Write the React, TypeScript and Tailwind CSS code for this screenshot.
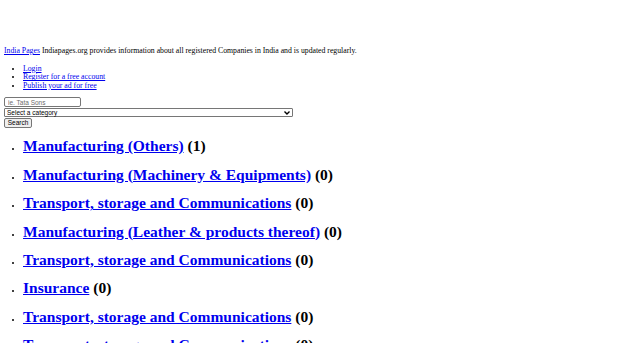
import React from "react";

const cats: [string, number][] = [
  ["Manufacturing (Others)", 1],
  ["Manufacturing (Machinery & Equipments)", 0],
  ["Transport, storage and Communications", 0],
  ["Manufacturing (Leather & products thereof)", 0],
  ["Transport, storage and Communications", 0],
  ["Insurance", 0],
  ["Transport, storage and Communications", 0],
  ["Transport, storage and Communications", 0],
];

export default function App() {
  return (
    <div className="bg-white text-black px-[4px] pt-[47px] text-[7.75px] leading-[8.6px]" style={{ fontFamily: '"Liberation Serif", serif' }}>
      <p>
        <a href="#" className="text-[#0000EE] underline">India Pages</a> Indiapages.org provides information about all registered Companies in India and is updated regularly.
      </p>
      <ul className="list-disc pl-[19px] mt-[9px]">
        <li><a href="#" className="text-[#0000EE] underline">Login</a></li>
        <li><a href="#" className="text-[#0000EE] underline">Register for a free account</a></li>
        <li><a href="#" className="text-[#0000EE] underline">Publish your ad for free</a></li>
      </ul>
      <form className="mt-[7px] flex flex-col items-start" style={{ fontFamily: '"Liberation Sans", sans-serif' }}>
        <input
          className="w-[77px] h-[10px] border border-[#767676] rounded-[2px] px-[3px] text-[6.5px] placeholder:text-[#6b6b6b]"
          placeholder="ie. Tata Sons"
        />
        <div className="w-[289px] h-[9px] border border-[#767676] rounded-[1px] flex items-center justify-between px-[2px] text-[6.5px] mt-[1px]">
          <span>Select a category</span>
          <svg width="6" height="4" viewBox="0 0 6 4"><path d="M0.5 0.5 L3 3 L5.5 0.5" stroke="#000" strokeWidth="1.4" fill="none" /></svg>
        </div>
        <button type="button" className="w-[28px] h-[10px] bg-[#efefef] border border-[#767676] rounded-[2px] text-[6.5px] leading-none mt-[1px]">Search</button>
      </form>
      <ul className="list-disc pl-[19px] mt-[8px]">
        {cats.map(([name, n], i) => (
          <li key={i} className="h-[28.4px] pt-[1px]">
            <div className="text-[15.5px] leading-[18px] font-bold">
              <a href="#" className="text-[#0000EE] underline">{name}</a> ({n})
            </div>
          </li>
        ))}
      </ul>
    </div>
  );
}
